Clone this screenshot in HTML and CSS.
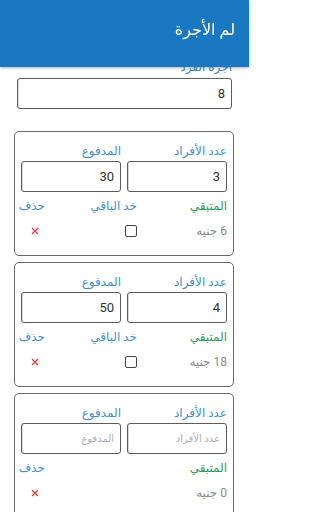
FILE: index.html
```
<!DOCTYPE html>
<html lang="ar">
<head>
<meta charset="utf-8">
<link rel="stylesheet" href="styles.css">
</head>
<body>
<div class="app" dir="rtl">
<header class="appbar"><h1 class="title">لم الأجرة</h1></header>
<main class="content">
  <div class="fare">
    <label class="fare-label">أجرة الفرد</label>
    <div class="field"><span class="val">8</span></div>
  </div>

  <section class="card">
    <div class="inputs">
      <div class="col"><div class="lbl blue">عدد الأفراد</div><div class="field"><span class="val">3</span></div></div>
      <div class="col"><div class="lbl blue">المدفوع</div><div class="field"><span class="val">30</span></div></div>
    </div>
    <div class="grid">
      <div class="lbl green">المتبقي</div>
      <div class="lbl blue">خد الباقي</div>
      <div class="lbl blue del-h">حذف</div>
      <div class="rest">6 جنيه</div>
      <div class="chk-cell"><span class="chk"></span></div>
      <div class="del"><svg width="8" height="8" viewBox="0 0 8 8"><path d="M1 1L7 7M7 1L1 7" stroke="#f03c3c" stroke-width="1.4"/></svg></div>
    </div>
  </section>

  <section class="card">
    <div class="inputs">
      <div class="col"><div class="lbl blue">عدد الأفراد</div><div class="field"><span class="val">4</span></div></div>
      <div class="col"><div class="lbl blue">المدفوع</div><div class="field"><span class="val">50</span></div></div>
    </div>
    <div class="grid">
      <div class="lbl green">المتبقي</div>
      <div class="lbl blue">خد الباقي</div>
      <div class="lbl blue del-h">حذف</div>
      <div class="rest">18 جنيه</div>
      <div class="chk-cell"><span class="chk"></span></div>
      <div class="del"><svg width="8" height="8" viewBox="0 0 8 8"><path d="M1 1L7 7M7 1L1 7" stroke="#f03c3c" stroke-width="1.4"/></svg></div>
    </div>
  </section>

  <section class="card">
    <div class="inputs">
      <div class="col"><div class="lbl blue">عدد الأفراد</div><div class="field"><span class="ph">عدد الأفراد</span></div></div>
      <div class="col"><div class="lbl blue">المدفوع</div><div class="field"><span class="ph">المدفوع</span></div></div>
    </div>
    <div class="grid">
      <div class="lbl green">المتبقي</div>
      <div class="lbl blue"></div>
      <div class="lbl blue del-h">حذف</div>
      <div class="rest">0 جنيه</div>
      <div class="chk-cell"></div>
      <div class="del"><svg width="8" height="8" viewBox="0 0 8 8"><path d="M1 1L7 7M7 1L1 7" stroke="#f03c3c" stroke-width="1.4"/></svg></div>
    </div>
  </section>
</main>
</div>
</body>
</html>
```
FILE: styles.css
```
html, body {
  margin: 0;
  padding: 0;
  background: #fff;
  overflow: hidden;
  direction: ltr;
}
.app {
  width: 249px;
  height: 512px;
  overflow: hidden;
  font-family: Roboto, "Noto Sans", "DejaVu Sans", sans-serif;
}
.appbar {
  position: fixed;
  top: 0;
  left: 0;
  width: 249px;
  box-sizing: border-box;
  height: 67px;
  background: #1a77c1;
  box-shadow: 0 1px 3px rgba(0,0,0,0.3);
  z-index: 2;
  display: flex;
  align-items: flex-start;
  padding: 0 14px;
}
.title {
  margin: 20px 0 0;
  font-size: 16px;
  font-weight: 500;
  line-height: 20px;
  color: #fff;
}
.content {
  padding: 59px 15px 0 14px;
}
.fare {
  margin: 0 2px 0 3px;
}
.fare-label {
  display: block;
  font-size: 12px;
  line-height: 16px;
  color: #3d8fd4;
  margin-bottom: 3px;
}
.field {
  box-sizing: border-box;
  height: 31px;
  border: 1px solid #5c5c5c;
  border-radius: 3px;
  box-shadow: inset 1px 0 0 #d8d8d8;
  display: flex;
  align-items: center;
  padding: 0 6px;
  background: #fff;
}
.val {
  font-size: 13px;
  color: #333;
}
.ph {
  font-size: 10px;
  color: #b0b0b0;
}
.card {
  margin-top: 22px;
  border: 1px solid #6a6a6a;
  border-radius: 5px;
  padding: 11px 6px 16px 6px;
}
.card + .card {
  margin-top: 6px;
}
.inputs {
  display: grid;
  grid-template-columns: 1fr 1fr;
  gap: 6px;
}
.lbl {
  font-size: 12px;
  line-height: 16px;
  white-space: nowrap;
}
.inputs .lbl {
  margin-bottom: 2px;
}
.blue { color: #3d8fd4; }
.green { color: #2a9d57; }
.grid {
  display: grid;
  grid-template-columns: 90px 1fr 24px;
  margin-top: 6px;
  row-gap: 9px;
}
.rest {
  font-size: 12px;
  line-height: 16px;
  color: #8a8a8a;
}
.chk-cell {
  display: flex;
  align-items: center;
}
.chk {
  box-sizing: border-box;
  width: 12px;
  height: 12px;
  border: 1.5px solid #444;
  border-radius: 2px;
}
.del-h { text-align: center; }
.del {
  display: flex;
  align-items: center;
  justify-content: center;
  padding-left: 3px;
}
```
